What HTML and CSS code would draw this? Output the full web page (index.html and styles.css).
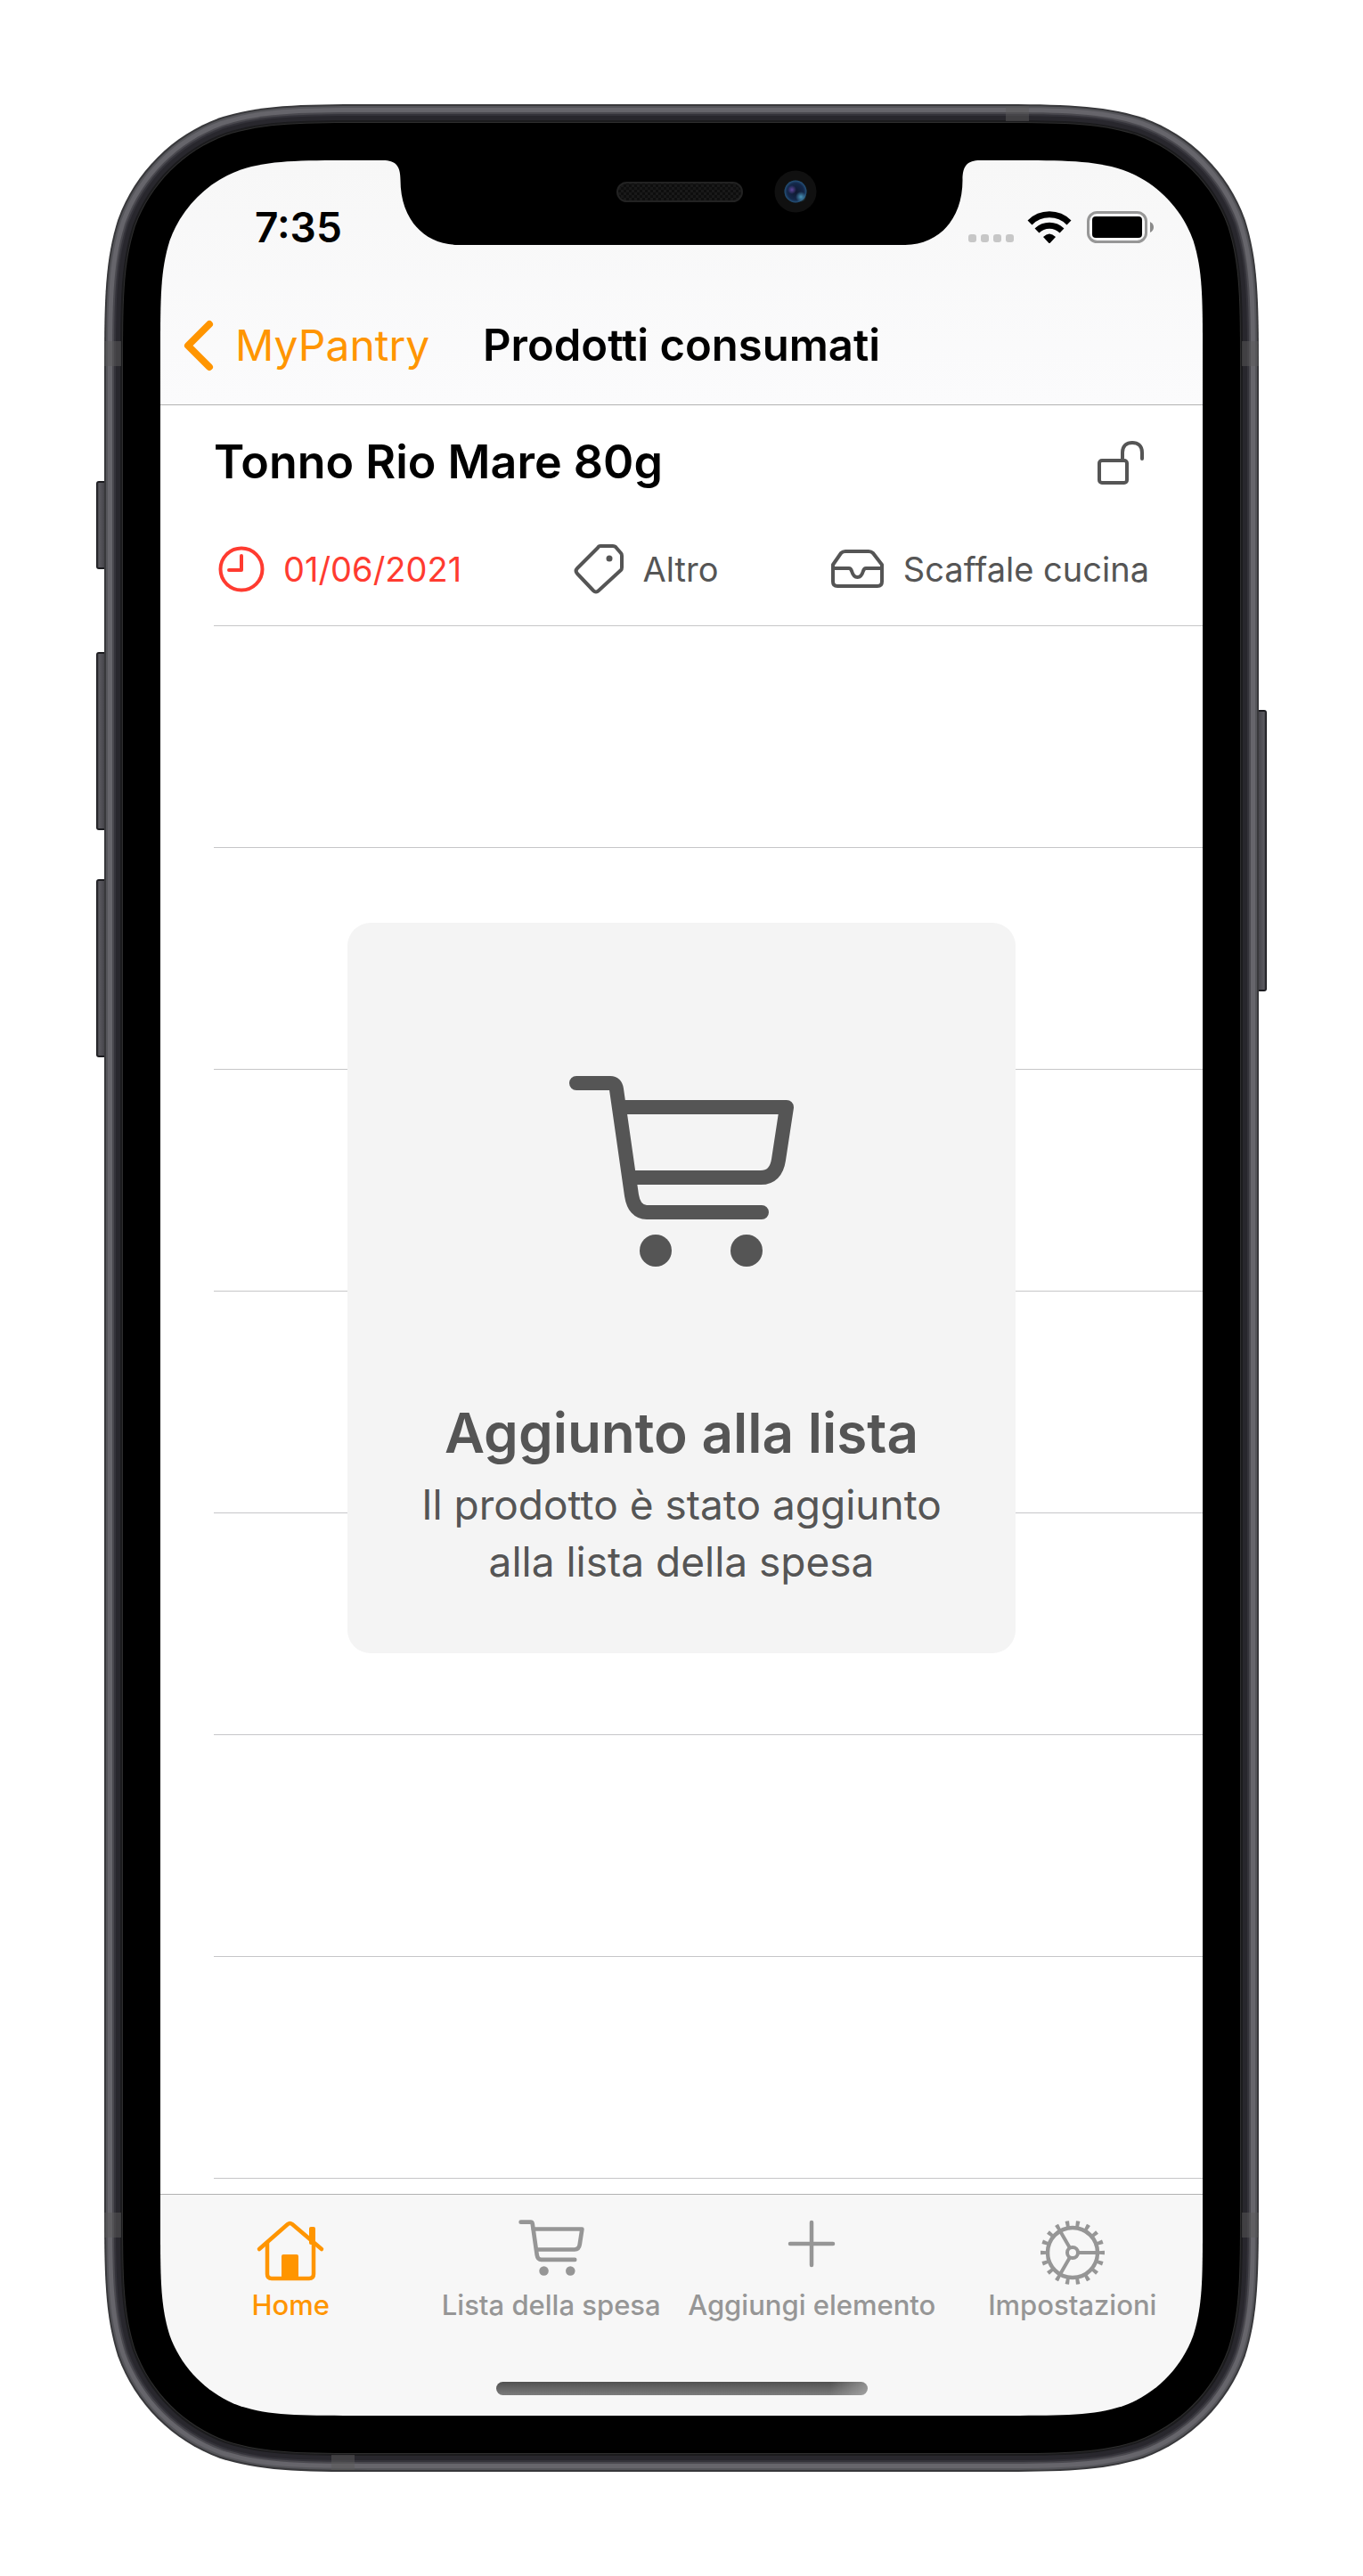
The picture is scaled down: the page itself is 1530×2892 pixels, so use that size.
FILE: index.html
```html
<!DOCTYPE html>
<html lang="it">
<head>
<meta charset="utf-8">
<meta name="viewport" content="width=device-width, initial-scale=1">
<title>Prodotti consumati</title>
<link rel="stylesheet" href="styles.css">
</head>
<body>
<svg class="defs" aria-hidden="true">
  <defs>
    <path id="curve" d="M152.87 0C108.85 0 86.84 0 63.15 7.49C37.28 16.91 16.91 37.28 7.49 63.15C0 86.84 0 108.85 0 152.87V400H400V0Z"/>
    <mask id="hole" maskUnits="userSpaceOnUse" x="0" y="0" width="330" height="330">
      <rect width="330" height="330" fill="#fff"/>
      <use href="#curve" transform="translate(63 63) scale(1.42)" fill="#000"/>
    </mask>
    <symbol id="corner" viewBox="0 0 330 330">
      <g mask="url(#hole)">
        <rect width="330" height="330" fill="#fff"/>
        <use href="#curve" transform="scale(2.05)" fill="#38383b"/>
        <use href="#curve" transform="translate(2 2) scale(2.03)" fill="#55555a"/>
        <use href="#curve" transform="translate(4 4) scale(2.01)" fill="#66656b"/>
        <use href="#curve" transform="translate(9 9) scale(1.96)" fill="#4a494f"/>
        <use href="#curve" transform="translate(11 11) scale(1.94)" fill="#34333a"/>
        <use href="#curve" transform="translate(13 13) scale(1.92)" fill="#28272d"/>
        <use href="#curve" transform="translate(18 18) scale(1.87)" fill="#1b1b1d"/>
        <use href="#curve" transform="translate(20 20) scale(1.85)" fill="#2e2e2e"/>
        <use href="#curve" transform="translate(21 21) scale(1.84)" fill="#000"/>
      </g>
    </symbol>
    <symbol id="cart" viewBox="0 0 254 216">
      <g fill="none" stroke="currentColor" stroke-width="16" stroke-linecap="round" stroke-linejoin="round">
        <path d="M9 9H47Q53 9 54 16L71 135Q74 154 88 154H217"/>
        <path d="M58 36H245L236 95Q233 115 216 115H71"/>
      </g>
      <circle cx="98" cy="197" r="18" fill="currentColor"/>
      <circle cx="200" cy="197" r="18" fill="currentColor"/>
    </symbol>
    <radialGradient id="lens" cx=".5" cy=".5" r=".5">
      <stop offset="0" stop-color="#10182f"/><stop offset=".75" stop-color="#14284a"/><stop offset="1" stop-color="#25547c"/>
    </radialGradient>
    <radialGradient id="glintA"><stop offset="0" stop-color="#5d459a"/><stop offset="1" stop-color="#5d459a" stop-opacity="0"/></radialGradient>
    <radialGradient id="glintB"><stop offset="0" stop-color="#4a95b8"/><stop offset="1" stop-color="#4a95b8" stop-opacity="0"/></radialGradient>
    <pattern id="mesh" width="6" height="6" patternUnits="userSpaceOnUse">
      <rect width="6" height="6" fill="#0e0e0e"/><path d="M0 0H3V3H6V6H3V3H0Z" fill="#191919"/>
    </pattern>
  </defs>
</svg>

<div class="phone">
  <span class="key key-mute"></span>
  <span class="key key-up"></span>
  <span class="key key-down"></span>
  <span class="key key-power"></span>

  <div class="screen">
    <header class="header">
      <div class="status">
        <span class="time">7:35</span>
        <div class="indicators">
          <span class="signal"><i></i><i></i><i></i><i></i></span>
          <svg width="51" height="38" viewBox="0 0 51 38" aria-label="Wi-Fi">
            <g fill="none" stroke="#000" stroke-width="7"><path d="M3 14A31 31 0 0 1 47 14"/><path d="M11 23A20 20 0 0 1 39 23"/></g>
            <path d="M18 30Q25 23 32 30L26 36.500Q25 37.500 24 36.500Z"/>
          </svg>
          <svg width="77" height="38" viewBox="0 0 77 38" aria-label="Batteria">
            <rect x="2.500" y="2.500" width="65" height="33" rx="10" fill="none" stroke="#979797" stroke-width="3"/>
            <rect x="7" y="7" width="56" height="24" rx="4"/>
            <path d="M72 13Q76 15 76 19T72 25Z" fill="#8a8a8a"/>
          </svg>
        </div>
      </div>
      <nav class="navbar">
        <a class="back" href="#home">
          <svg width="34" height="58" viewBox="0 0 34 58" aria-hidden="true"><path d="M29 5L5 29L29 53" fill="none" stroke="currentColor" stroke-width="8" stroke-linecap="round" stroke-linejoin="round"/></svg>
          <span>MyPantry</span>
        </a>
        <h1 class="title">Prodotti consumati</h1>
      </nav>
    </header>

    <ul class="list">
      <li class="product">
        <div class="product-head">
          <h2 class="product-name">Tonno Rio Mare 80g</h2>
          <button class="lock" type="button" aria-label="Sblocca">
            <svg width="54" height="51" viewBox="0 0 54 51"><g fill="none" stroke="currentColor" stroke-width="4" stroke-linecap="round"><rect x="3" y="23" width="31" height="25" rx="3"/><path d="M29 23V14C29 6 34 3 40 3S51 6 51 14V21"/></g></svg>
          </button>
        </div>
        <div class="meta">
          <span class="meta-item expired">
            <svg width="52" height="52" viewBox="0 0 52 52" aria-hidden="true"><g fill="none" stroke="currentColor" stroke-width="4" stroke-linecap="round" stroke-linejoin="round"><circle cx="26" cy="26" r="23.500"/><path d="M26 11V27H12"/></g></svg>
            <time datetime="2021-06-01">01/06/2021</time>
          </span>
          <span class="meta-item">
            <svg width="57" height="57" viewBox="0 0 57 57" aria-hidden="true"><path d="M30 3H44Q46 3 47 4L53 11Q54 12 54 14V27Q54 29 53 30L28 53Q25 56 22 53L4 34Q1 31 4 28L27 5Q28 3 30 3Z" fill="none" stroke="currentColor" stroke-width="4" stroke-linejoin="round"/><circle cx="40" cy="17" r="3.500" fill="currentColor"/></svg>
            <span>Altro</span>
          </span>
          <span class="meta-item">
            <svg width="61" height="45" viewBox="0 0 61 45" aria-hidden="true"><g fill="none" stroke="currentColor" stroke-width="4" stroke-linejoin="round"><path d="M17 3H43Q46 3 48 5L58 18V37Q58 42 53 42H8Q3 42 3 37V18L12 5Q14 3 17 3Z"/><path d="M3 22H21Q23 22 24 25Q26 32 30.500 32T37 25Q38 22 40 22H58"/></g></svg>
            <span>Scaffale cucina</span>
          </span>
        </div>
      </li>
      <li class="empty"></li>
      <li class="empty"></li>
      <li class="empty"></li>
      <li class="empty"></li>
      <li class="empty"></li>
      <li class="empty"></li>
      <li class="empty"></li>
    </ul>

    <footer class="footer">
      <nav class="tabs">
        <a class="tab active" href="#home">
          <span class="tab-icon"><svg width="78" height="70" viewBox="0 0 78 70" aria-hidden="true"><g fill="none" stroke="currentColor" stroke-width="4.500" stroke-linecap="round" stroke-linejoin="round"><path d="M4 33L36 5Q38.500 3 41 5L74 33"/><path d="M13 26V61Q13 66 18 66H60Q65 66 65 61V26"/></g><rect x="29" y="39" width="19" height="28" rx="2" fill="currentColor"/><rect x="60" y="8" width="7" height="20" rx="2" fill="currentColor"/></svg></span>
          <span>Home</span>
        </a>
        <a class="tab" href="#lista">
          <span class="tab-icon"><svg width="74" height="63" aria-hidden="true"><use href="#cart"/></svg></span>
          <span>Lista della spesa</span>
        </a>
        <a class="tab" href="#aggiungi">
          <span class="tab-icon"><svg width="54" height="54" viewBox="0 0 54 54" aria-hidden="true"><path d="M27 3V51M3 27H51" fill="none" stroke="currentColor" stroke-width="4.500" stroke-linecap="round"/></svg></span>
          <span>Aggiungi elemento</span>
        </a>
        <a class="tab" href="#impostazioni">
          <span class="tab-icon"><svg width="74" height="74" viewBox="0 0 74 74" aria-hidden="true"><g fill="none" stroke="currentColor"><circle cx="37" cy="37" r="28" stroke-width="4.500"/><circle cx="37" cy="37" r="32.500" stroke-width="7" pathLength="180" stroke-dasharray="3.600 6.400" stroke-dashoffset="1.800"/><circle cx="37" cy="37" r="6" stroke-width="4"/><path d="M43 37H65M34 31.800L23 12.700M34 42.200L23 61.300" stroke-width="4"/></g></svg></span>
          <span>Impostazioni</span>
        </a>
      </nav>
      <div class="home-bar"></div>
    </footer>

    <div class="toast" role="status">
      <svg class="toast-icon" width="254" height="216" aria-hidden="true"><use href="#cart"/></svg>
      <p class="toast-title">Aggiunto alla lista</p>
      <p class="toast-text">Il prodotto è stato aggiunto alla lista della spesa</p>
    </div>

    <svg class="notch" width="670" height="95" viewBox="0 0 670 95" aria-hidden="true">
      <path d="M0 0C14 0 19.500 6 19.500 22C19.500 66 46 95 85 95H585C624 95 650.500 66 650.500 22C650.500 6 656 0 670 0Z"/>
      <rect x="263" y="25" width="140" height="21" rx="10.500" fill="url(#mesh)" stroke="#222" stroke-width="2"/>
      <circle cx="463" cy="35" r="23.500" fill="#101010"/>
      <circle cx="463" cy="35" r="12.500" fill="url(#lens)"/>
      <circle cx="459" cy="33" r="5" fill="url(#glintA)"/>
      <circle cx="469" cy="41" r="6" fill="url(#glintB)"/>
    </svg>
  </div>

  <svg class="corner tl" width="330" height="330" aria-hidden="true"><use href="#corner"/></svg>
  <svg class="corner tr" width="330" height="330" aria-hidden="true"><use href="#corner"/></svg>
  <svg class="corner bl" width="330" height="330" aria-hidden="true"><use href="#corner"/></svg>
  <svg class="corner br" width="330" height="330" aria-hidden="true"><use href="#corner"/></svg>
  <span class="band band-top"></span>
  <span class="band band-bottom"></span>
  <span class="band band-side left upper"></span>
  <span class="band band-side right upper"></span>
  <span class="band band-side left lower"></span>
  <span class="band band-side right lower"></span>
</div>
</body>
</html>
```
FILE: styles.css
```css
* {
  box-sizing: border-box;
}

body {
  margin: 0;
  padding: 117px;
  background: #fff;
  color: #000;
  font-family: Inter, "Liberation Sans", sans-serif;
}

h1, h2, p, ul {
  margin: 0;
  padding: 0;
}

a {
  text-decoration: none;
}

svg {
  display: block;
  flex: none;
}

.defs {
  position: absolute;
  width: 0;
  height: 0;
}

/* Phone body */
.phone {
  position: relative;
  max-width: 1296px;
  margin: 0 auto;
  padding: 63px;
  background: #000;
  border-radius: 200px;
  box-shadow:
    inset 0 0 0 2px #38383b,
    inset 0 0 0 4px #55555a,
    inset 0 0 0 9px #66656b,
    inset 0 0 0 11px #4a494f,
    inset 0 0 0 13px #34333a,
    inset 0 0 0 18px #28272d,
    inset 0 0 0 20px #1b1b1d,
    inset 0 0 0 21px #2e2e2e;
}

.corner {
  position: absolute;
  pointer-events: none;
}

.tl { top: 0; left: 0; }
.tr { top: 0; right: 0; transform: scaleX(-1); }
.bl { bottom: 0; left: 0; transform: scaleY(-1); }
.br { bottom: 0; right: 0; transform: scale(-1); }

.key {
  position: absolute;
  left: -9px;
  width: 9px;
  background: linear-gradient(to right, #1c1c20 1px, #5b5a60 3px, #46454b);
  border: solid #1c1c20;
  border-width: 2px 0;
  border-radius: 3px 0 0 3px;
}

.key-mute { top: 423px; height: 99px; }
.key-up { top: 615px; height: 200px; }
.key-down { top: 870px; height: 200px; }
.key-power {
  top: 680px;
  left: auto;
  right: -9px;
  height: 316px;
  transform: scaleX(-1);
}

.band {
  position: absolute;
  background: rgba(90, 90, 90, .5);
}

.band-top { top: 2px; right: 258px; width: 26px; height: 17px; }
.band-bottom { bottom: 2px; left: 255px; width: 26px; height: 17px; }
.band-side { width: 19px; height: 28px; }
.left { left: 0; }
.right { right: 0; }
.upper { top: 266px; }
.lower { bottom: 263px; }

/* Screen */
.screen {
  position: relative;
  background: #fff;
}

.notch {
  position: absolute;
  top: 0;
  left: 50%;
  margin-left: -335px;
}

.header {
  background: linear-gradient(#f7f7f7, #fbfbfc);
  border-bottom: 1px solid #b2b2b2;
}

.status {
  display: flex;
  align-items: center;
  justify-content: space-between;
  height: 141px;
  padding: 9px 54px 0 106px;
}

.time {
  font-size: 46px;
  font-weight: 600;
  line-height: 56px;
}

.indicators {
  display: flex;
  align-items: flex-end;
  gap: 15px;
}

.signal {
  display: flex;
  gap: 5px;
  padding-bottom: 2px;
}

.signal i {
  width: 9px;
  height: 9px;
  border-radius: 3px;
  background: #c7c7c7;
}

.navbar {
  display: grid;
  grid-template-columns: 1fr auto 1fr;
  align-items: center;
  height: 133px;
  padding: 0 26px;
}

.back {
  display: flex;
  align-items: center;
  gap: 24px;
  color: #ff9500;
  font-size: 48px;
  line-height: 60px;
}

.title {
  font-size: 49px;
  font-weight: 600;
  line-height: 60px;
}

/* Product list */
.list {
  padding: 0 0 17px 60px;
  list-style: none;
}

.product,
.empty {
  border-bottom: 1px solid #c6c6c8;
}

.empty {
  height: 249px;
}

.product {
  padding: 32px 60px 35px 0;
}

.product-head,
.meta {
  display: flex;
  align-items: center;
  justify-content: space-between;
}

.product-head {
  margin-bottom: 59px;
}

.product-name {
  font-size: 52px;
  font-weight: 600;
  line-height: 64px;
}

.lock {
  margin-right: 5px;
  padding: 0;
  border: 0;
  background: none;
  color: #555;
}

.meta {
  color: #555;
  font-size: 38px;
  line-height: 56px;
  padding-left: 5px;
}

.meta-item {
  display: flex;
  align-items: center;
  gap: 21px;
}

.expired {
  color: #ff3b30;
}

/* Confirmation message */
.toast {
  position: absolute;
  inset: 0;
  width: 750px;
  max-width: 100%;
  height: fit-content;
  margin: auto;
  padding: 171px 60px 71px;
  border-radius: 26px;
  background: #f4f4f4;
  color: #555;
  text-align: center;
}

.toast-icon {
  margin: 0 auto 148px;
}

.toast-title {
  margin-bottom: 10px;
  font-size: 62px;
  font-weight: 600;
  line-height: 76px;
}

.toast-text {
  font-size: 46px;
  line-height: 64px;
}

/* Tab bar */
.footer {
  padding: 28px 0 23px;
  border-top: 1px solid #b2b2b2;
  background: #f7f7f7;
}

.tabs {
  display: grid;
  grid-template-columns: repeat(4, 1fr);
}

.tab {
  display: flex;
  flex-direction: column;
  align-items: center;
  gap: 4px;
  color: #969696;
  font-size: 31px;
  font-weight: 500;
  line-height: 36px;
  white-space: nowrap;
}

.active {
  color: #ff9500;
}

.tab-icon {
  height: 74px;
}

.home-bar {
  width: 417px;
  max-width: 60%;
  height: 15px;
  margin: 68px auto 0;
  border-radius: 8px;
  background:
    linear-gradient(to right, transparent 90%, rgba(200, 200, 200, .5)),
    linear-gradient(#505050, #7c7c7c);
}
```
